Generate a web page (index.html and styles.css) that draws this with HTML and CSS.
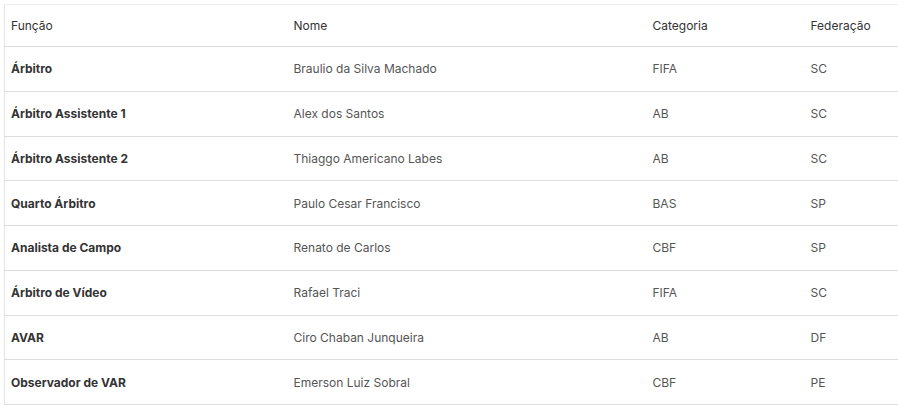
FILE: index.html
```html
<!DOCTYPE html>
<html lang="pt-BR">
<head>
<meta charset="utf-8">
<link rel="stylesheet" href="styles.css">
</head>
<body>
<div class="wrap">
<table class="tbl">
  <colgroup>
    <col class="c1"><col class="c2"><col class="c3"><col class="c4">
  </colgroup>
  <thead>
    <tr><th>Função</th><th>Nome</th><th>Categoria</th><th>Federação</th></tr>
  </thead>
  <tbody>
    <tr><td class="role">Árbitro</td><td>Braulio da Silva Machado</td><td>FIFA</td><td>SC</td></tr>
    <tr><td class="role">Árbitro Assistente 1</td><td>Alex dos Santos</td><td>AB</td><td>SC</td></tr>
    <tr><td class="role">Árbitro Assistente 2</td><td>Thiaggo Americano Labes</td><td>AB</td><td>SC</td></tr>
    <tr><td class="role">Quarto Árbitro</td><td>Paulo Cesar Francisco</td><td>BAS</td><td>SP</td></tr>
    <tr><td class="role">Analista de Campo</td><td>Renato de Carlos</td><td>CBF</td><td>SP</td></tr>
    <tr><td class="role">Árbitro de Vídeo</td><td>Rafael Traci</td><td>FIFA</td><td>SC</td></tr>
    <tr><td class="role">AVAR</td><td>Ciro Chaban Junqueira</td><td>AB</td><td>DF</td></tr>
    <tr><td class="role">Observador de VAR</td><td>Emerson Luiz Sobral</td><td>CBF</td><td>PE</td></tr>
  </tbody>
</table>
</div>
</body>
</html>
```
FILE: styles.css
```css
html, body {
  margin: 0;
  padding: 0;
  background: #fff;
  overflow: hidden;
}
.wrap {
  padding: 4px 0 0 4px;
  width: 920px;
}
.tbl {
  width: 916px;
  border-collapse: collapse;
  table-layout: fixed;
  font-family: Inter, "Open Sans", sans-serif;
  font-size: 12px;
  color: #555;
  border-top: 1px solid #eeeeee;
  border-left: 1px solid #e6e6e6;
}
.c1 { width: 283px; }
.c2 { width: 359px; }
.c3 { width: 158px; }
.c4 { width: 116px; }
.tbl th {
  text-align: left;
  font-weight: 400;
  color: #333;
  height: 42px;
  padding: 0 6px;
  border-bottom: 1px solid #dcdcdc;
  box-sizing: border-box;
}
.tbl td {
  height: 44.75px;
  padding: 0 6px;
  border-bottom: 1px solid #dcdcdc;
  box-sizing: border-box;
  vertical-align: middle;
}
.tbl td.role {
  font-weight: 700;
  color: #333;
}
```
